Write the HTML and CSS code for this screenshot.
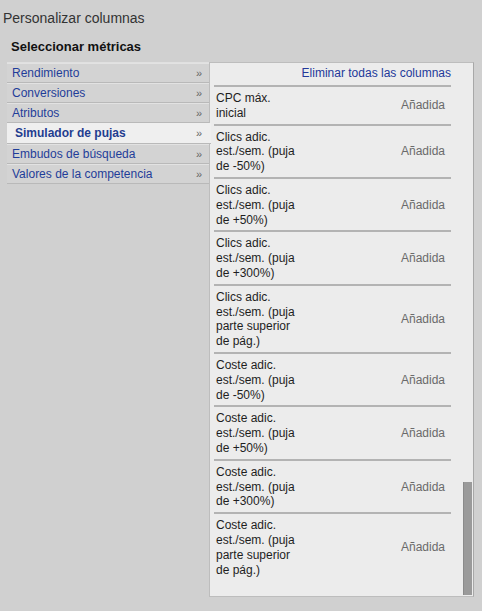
FILE: index.html
```html
<!DOCTYPE html>
<html lang="es">
<head>
<meta charset="utf-8">
<title>Personalizar columnas</title>
<link rel="stylesheet" href="styles.css">
</head>
<body>
<div class="dialog">
  <h1 class="title">Personalizar columnas</h1>
  <h2 class="subtitle">Seleccionar métricas</h2>
  <div class="columns">
    <ul class="menu">
      <li class="menu-item"><span>Rendimiento</span><span class="chev">»</span></li>
      <li class="menu-item"><span>Conversiones</span><span class="chev">»</span></li>
      <li class="menu-item"><span>Atributos</span><span class="chev">»</span></li>
      <li class="menu-item is-active"><span>Simulador de pujas</span><span class="chev">»</span></li>
      <li class="menu-item"><span>Embudos de búsqueda</span><span class="chev">»</span></li>
      <li class="menu-item"><span>Valores de la competencia</span><span class="chev">»</span></li>
    </ul>
    <div class="panel">
      <div class="list">
        <div class="list-head"><a class="remove-all">Eliminar todas las columnas</a></div>
        <div class="row"><span class="name">CPC máx. inicial</span><span class="state">Añadida</span></div>
        <div class="row"><span class="name">Clics adic. est./sem. (puja de -50%)</span><span class="state">Añadida</span></div>
        <div class="row"><span class="name">Clics adic. est./sem. (puja de +50%)</span><span class="state">Añadida</span></div>
        <div class="row"><span class="name">Clics adic. est./sem. (puja de +300%)</span><span class="state">Añadida</span></div>
        <div class="row"><span class="name">Clics adic. est./sem. (puja parte superior de pág.)</span><span class="state">Añadida</span></div>
        <div class="row"><span class="name">Coste adic. est./sem. (puja de -50%)</span><span class="state">Añadida</span></div>
        <div class="row"><span class="name">Coste adic. est./sem. (puja de +50%)</span><span class="state">Añadida</span></div>
        <div class="row"><span class="name">Coste adic. est./sem. (puja de +300%)</span><span class="state">Añadida</span></div>
        <div class="row last"><span class="name">Coste adic. est./sem. (puja parte superior de pág.)</span><span class="state">Añadida</span></div>
      </div>
      <div class="scroll"><div class="thumb"></div></div>
    </div>
  </div>
</div>
</body>
</html>
```
FILE: styles.css
```css
html, body {
  margin: 0;
  padding: 0;
  background: #d0d0d0;
}

body {
  font-family: "Liberation Sans", Arial, sans-serif;
  font-size: 12px;
  color: #222;
}

.dialog {
  width: 482px;
  height: 611px;
  overflow: hidden;
}

.title {
  margin: 0;
  padding: 10px 0 0 3px;
  font-size: 14px;
  font-weight: normal;
  line-height: 16px;
  color: #333;
}

.subtitle {
  margin: 0;
  padding: 13px 0 0 11px;
  font-size: 13px;
  font-weight: bold;
  line-height: 16px;
  color: #111;
}

.columns {
  display: flex;
  align-items: flex-start;
  margin-top: 7px;
}

.menu {
  list-style: none;
  margin: 0 0 0 7px;
  padding: 0;
  width: 202px;
  border-top: 1px solid #e0e0e0;
}

.menu-item {
  display: flex;
  justify-content: space-between;
  align-items: center;
  height: 19px;
  padding: 0 7px 0 5px;
  background: #d3d3d3;
  border-bottom: 1px solid #b9b9b9;
  box-shadow: inset 0 1px 0 #e2e2e2;
  color: #1f3d99;
  font-size: 12px;
}

.menu-item.is-active {
  height: 20px;
  padding-left: 8px;
  margin-right: -2px;
  padding-right: 9px;
  background: #efefef;
  box-shadow: none;
  font-weight: bold;
  font-size: 12px;
  color: #1f3d8f;
  position: relative;
  z-index: 1;
}

.chev {
  font-size: 11px;
  font-weight: normal;
  color: #666;
}

.panel {
  display: flex;
  width: 265px;
  height: 535px;
  background: #ececec;
  border: 1px solid #bdbdbd;
  border-right-color: #a8a8a8;
  box-sizing: border-box;
}

.list {
  width: 237px;
  margin-left: 4px;
}

.list-head {
  display: flex;
  justify-content: flex-end;
  height: 20px;
  padding-top: 2px;
  border-bottom: 2px solid #b3b3b3;
  line-height: 16px;
}

.remove-all {
  color: #23399a;
  font-size: 12px;
}

.row {
  display: flex;
  align-items: center;
  justify-content: space-between;
  padding: 4px 6px 3px 2px;
  border-bottom: 2px solid #b3b3b3;
  line-height: 14.8px;
}

.row.last {
  border-bottom: none;
}

.name {
  width: 82px;
  color: #1e1e1e;
}

.state {
  color: #6a6a6a;
}

.scroll {
  flex: 1;
  display: flex;
  flex-direction: column;
  justify-content: flex-end;
  align-items: flex-end;
  padding: 0 1px 1px 0;
}

.thumb {
  width: 8px;
  height: 113px;
  background: #9a9a9a;
  border-left: 1px solid #8a8a8a;
}
```
